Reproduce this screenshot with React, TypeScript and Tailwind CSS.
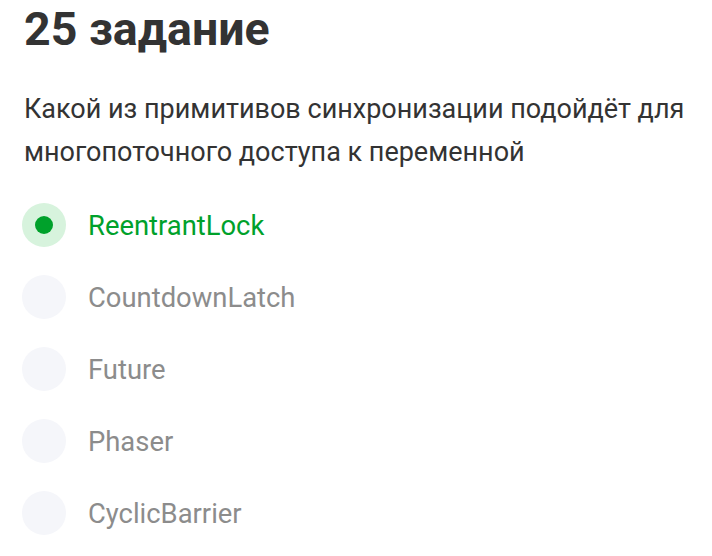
import React from "react";

const options = ["ReentrantLock", "CountdownLatch", "Future", "Phaser", "CyclicBarrier"];

export default function App() {
  return (
    <div className="w-[712px] h-[556px] bg-white pl-[24px] pt-[1px]" style={{ fontFamily: "Roboto, 'Liberation Sans', sans-serif" }}>
      <h1 className="text-[46.5px] leading-[56px] font-bold text-[#333333]">25 задание</h1>
      <p className="mt-[31px] text-[27px] leading-[43px] text-[#333333] w-[680px]">
        Какой из примитивов синхронизации подойдёт для многопоточного доступа к переменной
      </p>
      <div className="mt-[29px] flex flex-col gap-[28px] -ml-[2px]">
        {options.map((o, i) => (
          <div key={o} className="flex items-center gap-[22px] h-[44px]">
            <div className={`w-[44px] h-[44px] rounded-full flex items-center justify-center ${i === 0 ? "bg-[#d7f3dd]" : "bg-[#f5f6fa]"}`}>
              {i === 0 && <div className="w-[18px] h-[18px] rounded-full bg-[#00a12b]" />}
            </div>
            <span className={`text-[27.4px] leading-[30px] pt-[2px] ${i === 0 ? "text-[#00a12b]" : "text-[#8c8c8c]"}`}>{o}</span>
          </div>
        ))}
      </div>
    </div>
  );
}
